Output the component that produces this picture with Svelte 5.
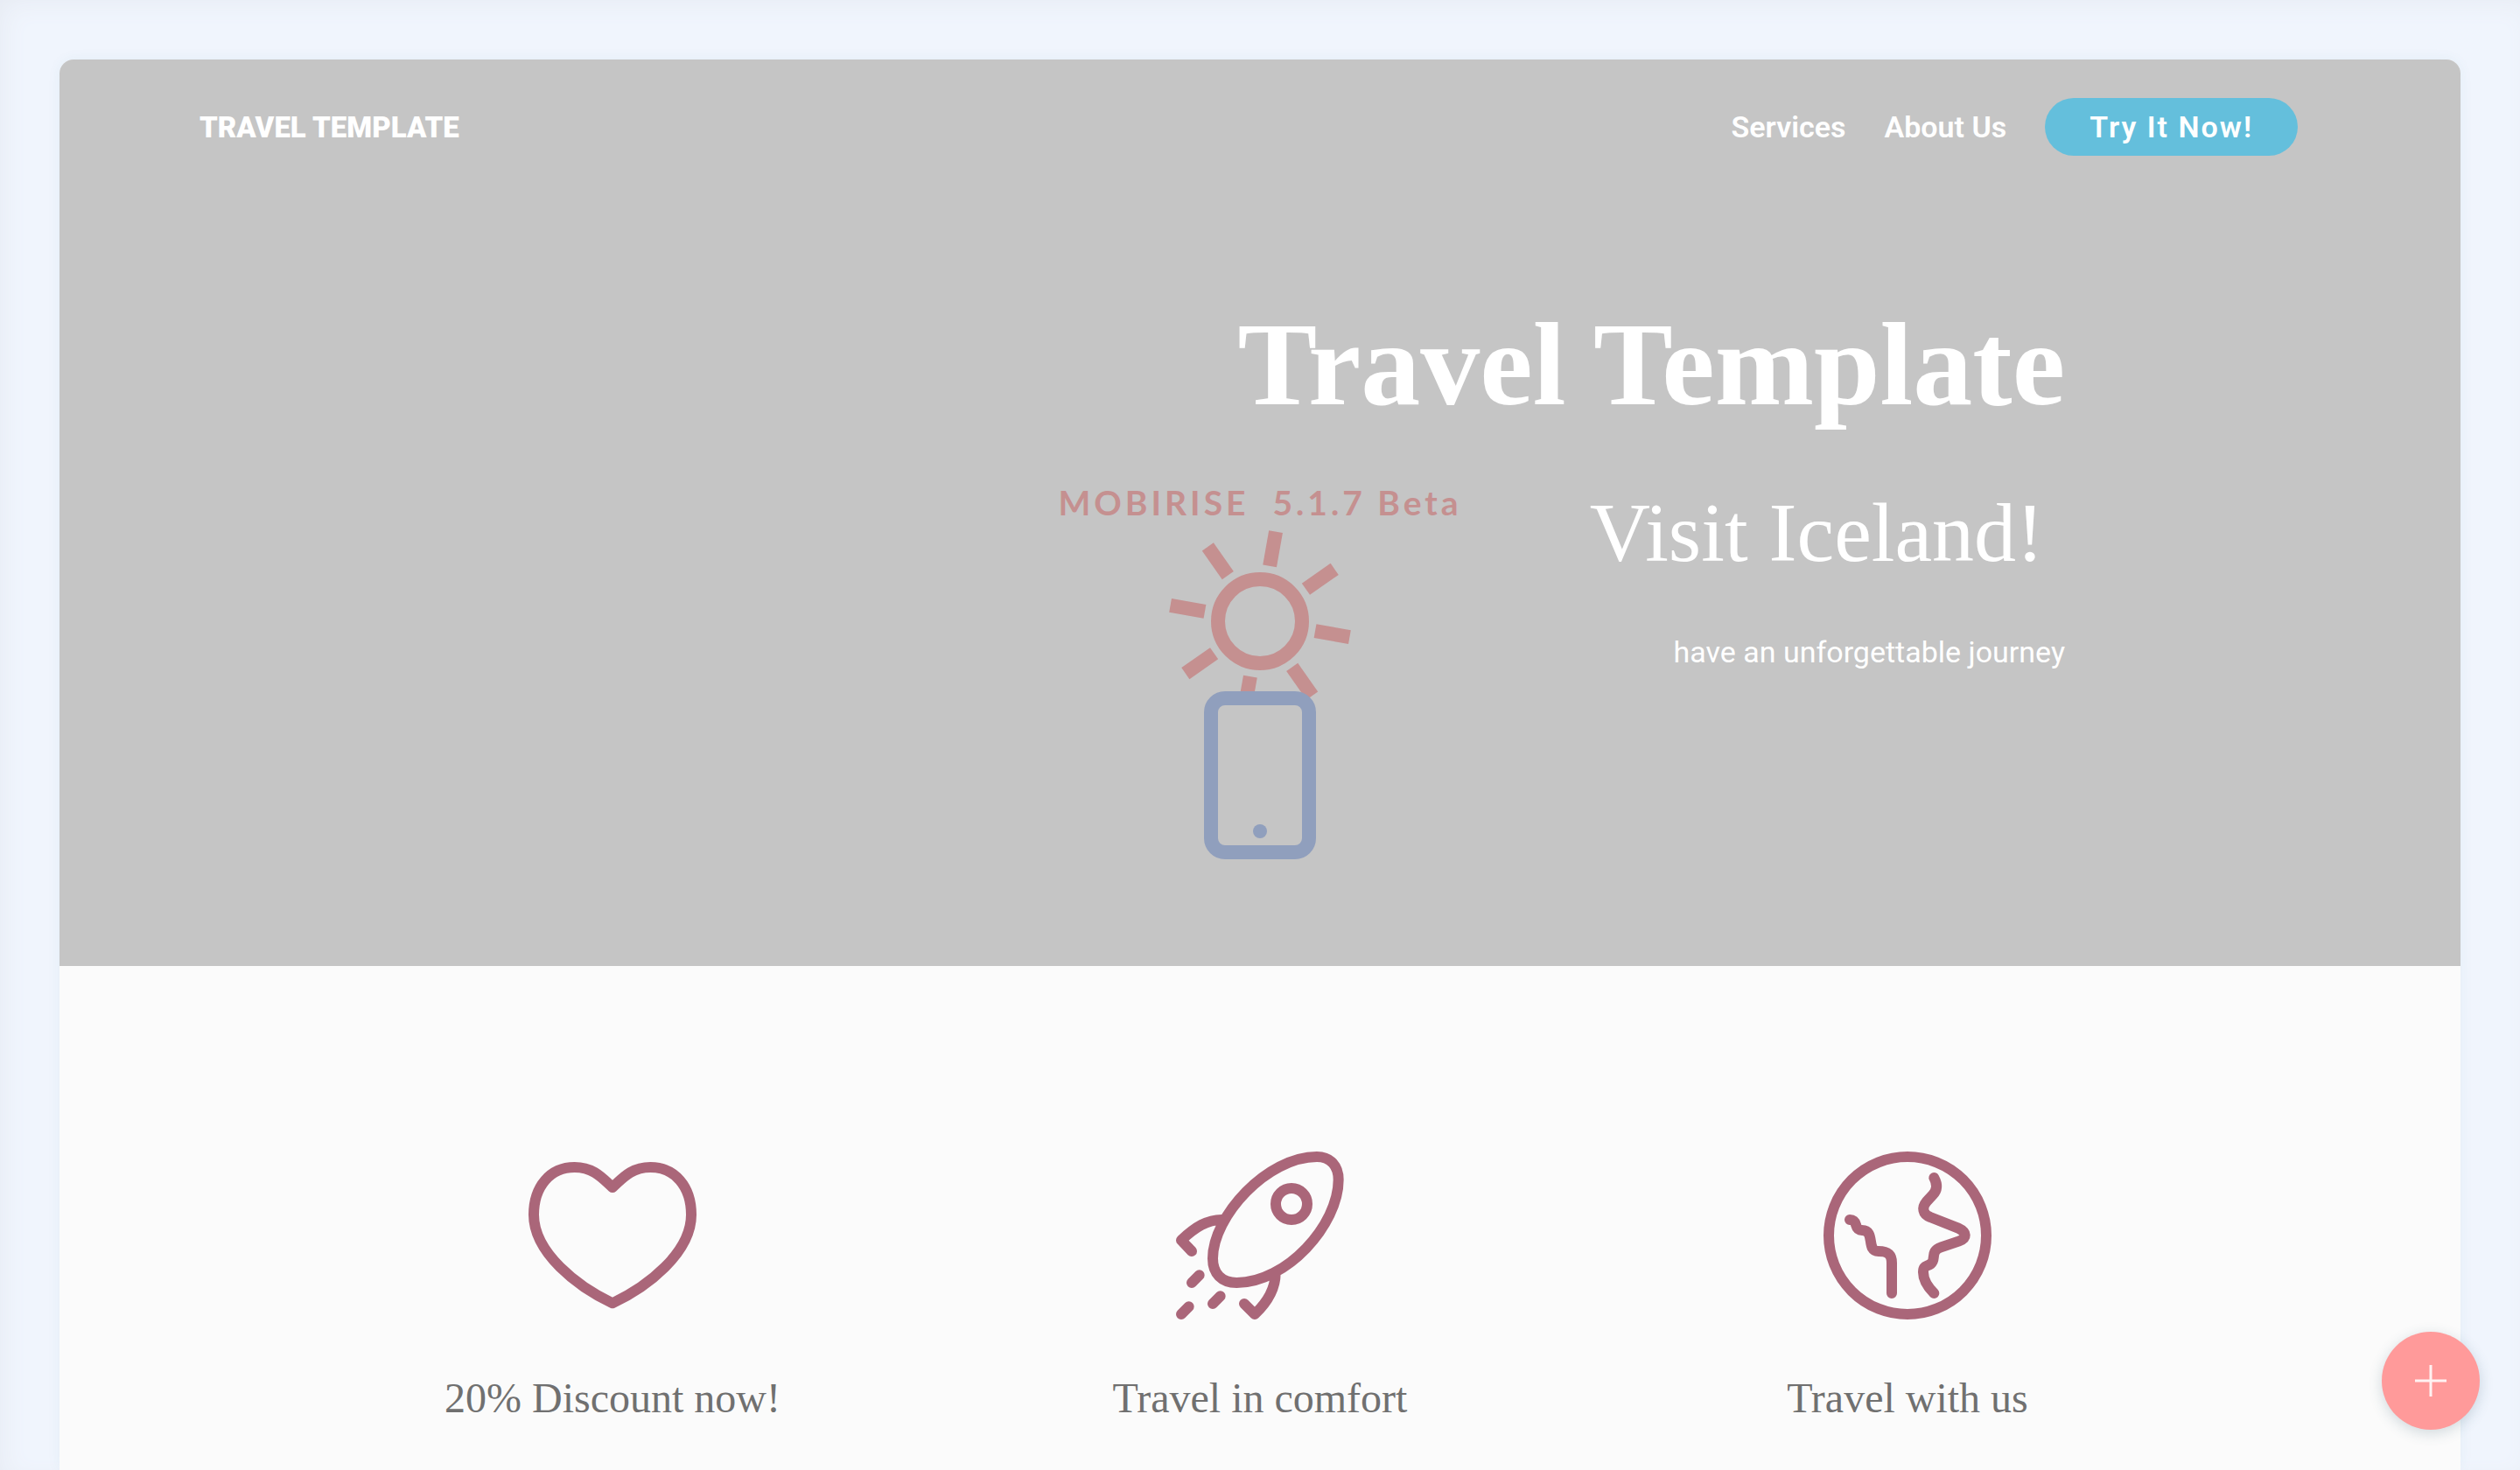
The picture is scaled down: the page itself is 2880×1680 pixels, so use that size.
<script>
  const links = ['Services', 'About Us'];

  const features = [
    {
      title: '20% Discount now!',
      viewBox: '372 108 576 576',
      path: 'M660 628C540 572 390 455 390 325C390 228 446 162 530 162C596 162 626 200 660 231C694 200 724 162 790 162C874 162 930 228 930 325C930 455 780 572 660 628Z'
    },
    {
      title: 'Travel in comfort',
      viewBox: '312 108 576 576',
      path: 'M795 126C842 126 869 158 869 205C869 360 690 558 520 558C468 558 438 526 438 475C438 330 625 126 795 126ZM762 288A54 54 0 1 1 654 288A54 54 0 1 1 762 288ZM478 342C420 338 375 370 330 412L366 450M653 525C653 580 625 625 582 666L546 630M392 532L366 558M464 604L438 630M356 640L330 666'
    },
    {
      title: 'Travel with us',
      viewBox: '252 108 576 576',
      path: 'M810 396A270 270 0 1 1 270 396A270 270 0 1 1 810 396ZM342 342C375 342 352 378 384 378C432 378 396 450 440 450C470 450 486 458 486 490V594M631 198C644 222 642 240 627 256L605 280C588 300 592 324 618 333L712 370C745 385 745 405 715 416L655 436C615 450 640 478 620 493C605 504 594 498 594 522C594 550 610 573 631 594'
    }
  ];

  const rays = [10, 55, 100, 145, 190, 235, 280, 325];
</script>

<div class="workspace">
  <main class="page">
    <section class="hero">
      <header>
        <a class="brand" href="#top">TRAVEL TEMPLATE</a>
        <nav>
          {#each links as link}
            <a class="link" href="#{link}">{link}</a>
          {/each}
          <button class="cta" type="button">Try It Now!</button>
        </nav>
      </header>

      <div class="builder">
        <p>MOBIRISE&nbsp; 5.1.7 Beta</p>
        <svg viewBox="0 0 216 376" aria-hidden="true">
          <g fill="none" stroke="#c59090" stroke-width="16">
            <circle cx="108" cy="104" r="48" />
            {#each rays as angle}
              <path d="M108 40V0" transform="rotate({angle} 108 104)" />
            {/each}
          </g>
          <rect x="52" y="192" width="112" height="176" rx="16" fill="#c5c5c5" stroke="#909fbd" stroke-width="16" />
          <circle cx="108" cy="344" r="8" fill="#909fbd" />
        </svg>
      </div>

      <div class="intro">
        <h1>Travel Template</h1>
        <h2>Visit Iceland!&nbsp;</h2>
        <p>have an unforgettable journey</p>
      </div>
    </section>

    <section class="features">
      {#each features as feature}
        <article>
          <svg viewBox={feature.viewBox} aria-hidden="true">
            <path d={feature.path} />
          </svg>
          <h3>{feature.title}</h3>
        </article>
      {/each}
    </section>
  </main>

  <button class="add" type="button" aria-label="Add block">
    <svg viewBox="0 0 36 36" aria-hidden="true"><path d="M18 0V36M0 18H36" /></svg>
  </button>
</div>

<style>
  :global(body) {
    background: #f0f5fd;
  }

  .workspace {
    box-sizing: border-box;
    min-height: 100vh;
    padding: 68px 68px 0;
    display: flex;
    flex-direction: column;
    background: #f0f5fd;
    box-shadow: inset 8px 8px 32px -8px #e5e9f1;
    font-family: Roboto, "Liberation Sans", sans-serif;
  }

  .page {
    flex: 1;
    border-radius: 16px 16px 0 0;
    overflow: hidden;
    background: #fbfbfb;
    box-shadow: 0 0 16px rgba(40, 120, 140, 0.06);
  }

  .hero {
    position: relative;
    padding-bottom: 335px;
    background: #c5c5c5;
    color: #fff;
  }

  header {
    display: flex;
    align-items: center;
    justify-content: space-between;
    padding: 44px 186px 0 160px;
  }

  a {
    color: inherit;
    text-decoration: none;
  }

  .brand {
    font-size: 33px;
    font-weight: 900;
  }

  nav {
    display: flex;
    align-items: center;
    gap: 44px;
  }

  .link {
    font-size: 34px;
    font-weight: 600;
  }

  .cta {
    height: 66px;
    padding: 0 51px;
    border: 0;
    border-radius: 33px;
    background: #64bfdc;
    color: #fff;
    font: 600 34px Roboto, "Liberation Sans", sans-serif;
    letter-spacing: 2px;
  }

  .builder {
    position: absolute;
    top: 480px;
    left: 0;
    right: 0;
    display: flex;
    flex-direction: column;
    align-items: center;
    gap: 6px;
    pointer-events: none;
  }

  .builder p {
    margin: 0;
    font-family: Lato, sans-serif;
    font-size: 39px;
    line-height: 52px;
    font-weight: 700;
    letter-spacing: 4px;
    color: #c59090;
    white-space: nowrap;
  }

  .builder svg {
    width: 216px;
    height: 376px;
    overflow: visible;
  }

  .intro {
    padding: 154px 452px 0;
    text-align: right;
  }

  h1,
  h2,
  h3 {
    margin: 0;
    font-family: "Liberation Serif", serif;
    font-weight: 400;
  }

  h1 {
    font-size: 136px;
    line-height: 168px;
    font-weight: 700;
  }

  h2 {
    margin-top: 51px;
    font-size: 96px;
    line-height: 116px;
  }

  .intro p {
    margin: 54px 0 0;
    font-size: 34px;
    line-height: 48px;
  }

  .features {
    display: grid;
    grid-template-columns: repeat(3, 1fr);
    padding: 212px 262px 48px;
  }

  article {
    display: flex;
    flex-direction: column;
    align-items: center;
    gap: 61px;
  }

  article svg {
    width: 192px;
    height: 192px;
  }

  article path {
    fill: none;
    stroke: #aa6679;
    stroke-width: 36;
    stroke-linecap: round;
    stroke-linejoin: round;
  }

  h3 {
    font-size: 48px;
    line-height: 58px;
    color: #707070;
  }

  .add {
    position: fixed;
    right: 46px;
    bottom: 46px;
    width: 112px;
    height: 112px;
    display: grid;
    place-items: center;
    padding: 0;
    border: 0;
    border-radius: 50%;
    background: #ff9a9a;
    box-shadow: 0 4px 16px rgba(40, 80, 100, 0.2);
  }

  .add svg {
    width: 36px;
    height: 36px;
  }

  .add path {
    stroke: #fff2f2;
    stroke-width: 3;
  }
</style>
